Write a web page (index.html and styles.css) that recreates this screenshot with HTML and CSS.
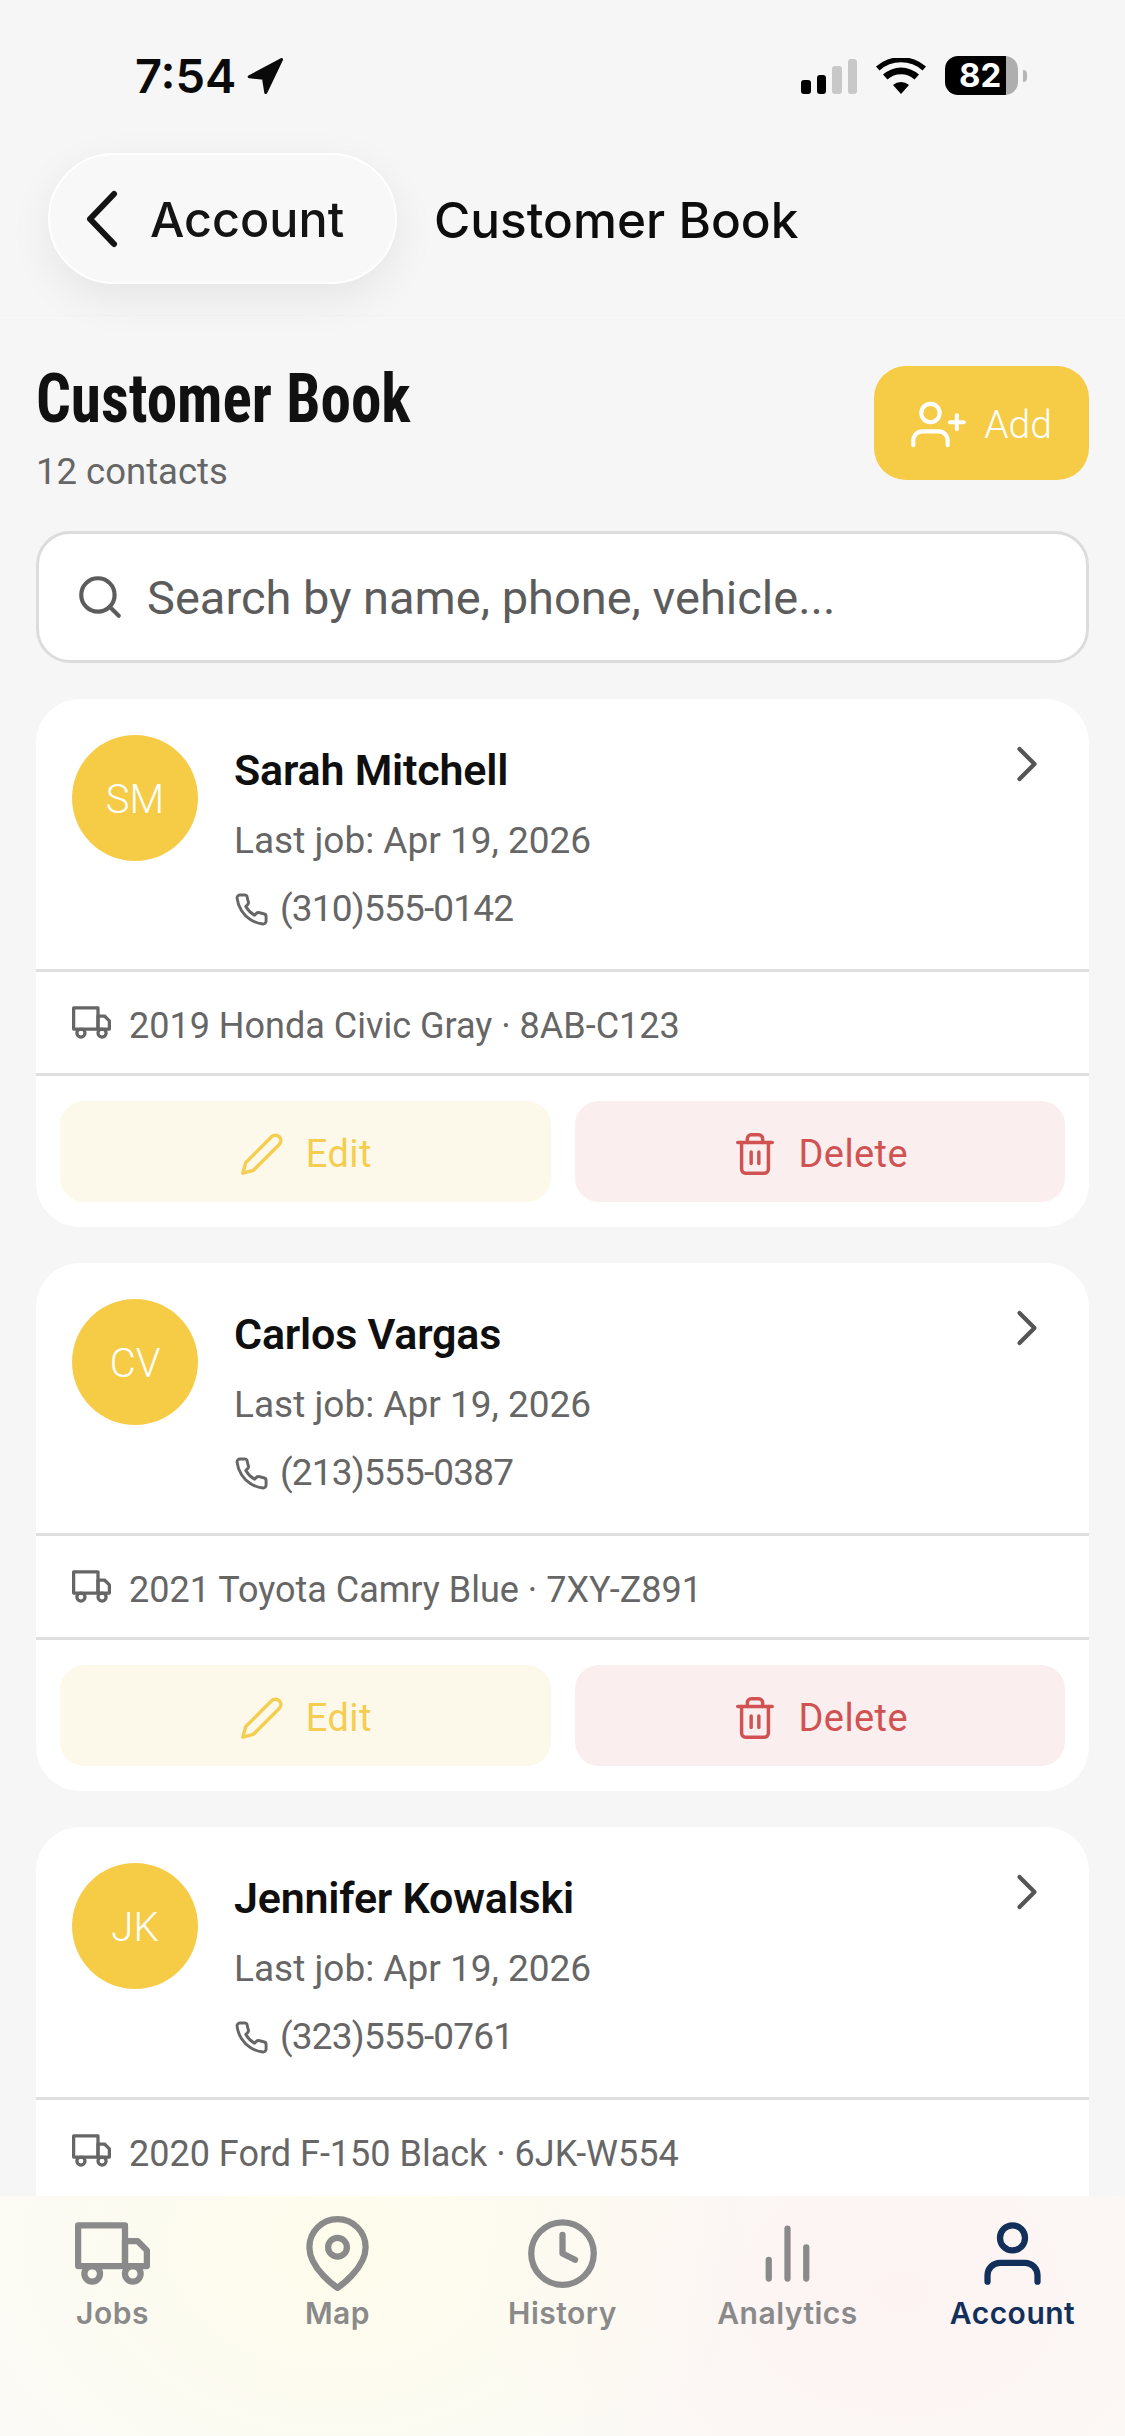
FILE: index.html
```html
<!DOCTYPE html>
<html lang="en">
<head>
  <meta charset="UTF-8">
  <meta name="viewport" content="width=device-width, initial-scale=1.0">
  <title>Customer Book</title>
  <link rel="stylesheet" href="styles.css">
</head>
<body>
  <!-- shared icons -->
  <svg class="icon-sprite" aria-hidden="true">
    <symbol id="i-truck" viewBox="0 0 24 24">
      <rect x="1" y="3" width="15" height="13"/><path d="M16 8h4l3 3v5h-7Z"/>
      <circle cx="5.500" cy="18.500" r="2.500"/><circle cx="18.500" cy="18.500" r="2.500"/>
    </symbol>
    <symbol id="i-phone" viewBox="0 0 24 24">
      <path d="M22 16.920v3a2 2 0 0 1-2.180 2 19.790 19.790 0 0 1-8.630-3.070 19.500 19.500 0 0 1-6-6 19.790 19.790 0 0 1-3.070-8.670A2 2 0 0 1 4.110 2h3a2 2 0 0 1 2 1.720 12.840 12.840 0 0 0 .7 2.810 2 2 0 0 1-.45 2.110L8.090 9.910a16 16 0 0 0 6 6l1.270-1.270a2 2 0 0 1 2.110-.45 12.840 12.840 0 0 0 2.810.7A2 2 0 0 1 22 16.920z"/>
    </symbol>
    <symbol id="i-pencil" viewBox="0 0 24 24">
      <path d="M17 3a2.828 2.828 0 1 1 4 4L7.500 20.500 2 22l1.500-5.500L17 3z"/>
    </symbol>
    <symbol id="i-trash" viewBox="0 0 24 24">
      <path d="M3 6h18"/><path d="M19 6v14a2 2 0 0 1-2 2H7a2 2 0 0 1-2-2V6m3 0V4a2 2 0 0 1 2-2h4a2 2 0 0 1 2 2v2"/>
      <path d="M10 11v6"/><path d="M14 11v6"/>
    </symbol>
    <symbol id="i-chevron" viewBox="0 0 24 24"><path d="m9 18 6-6-6-6"/></symbol>
  </svg>

  <div class="phone">
    <header class="top">
      <div class="status-bar">
        <div class="status-time">
          <span>7:54</span>
          <svg class="status-arrow" viewBox="0 0 24 24"><path d="M23 1 1.500 12.500l9.500 1 1.500 9.500Z"/></svg>
        </div>
        <div class="status-right">
          <div class="signal"><i class="bar-1"></i><i class="bar-2"></i><i class="bar-3 off"></i><i class="bar-4 off"></i></div>
          <svg class="wifi" viewBox="0 0 50 36">
            <path d="M25 36 17 27a12 12 0 0 1 16 0Z"/>
            <path d="M11.500 21.500 7 16.500a27 27 0 0 1 36 0l-4.500 5a20 20 0 0 0-27 0Z"/>
            <path d="M3.500 12.500 0 8.500a38 38 0 0 1 50 0l-3.500 4a32 32 0 0 0-43 0Z"/>
          </svg>
          <div class="battery">
            <div class="battery-body"><span>82</span></div>
            <div class="battery-cap"></div>
          </div>
        </div>
      </div>
      <div class="nav-row">
        <button class="back-pill" type="button">
          <svg viewBox="0 0 36 58" class="back-chevron"><path d="M30 4 6 29l24 25"/></svg>
          <span>Account</span>
        </button>
        <span class="nav-title">Customer Book</span>
      </div>
    </header>

    <main class="content">
      <div class="page-head">
        <div>
          <h1>Customer Book</h1>
          <p class="count">12 contacts</p>
        </div>
        <button class="add-btn" type="button">
          <svg viewBox="0 0 24 24" class="ico add-ico">
            <path d="M16 21v-2a4 4 0 0 0-4-4H5a4 4 0 0 0-4 4v2"/><circle cx="8.500" cy="7" r="4"/>
            <path d="M20 8v6"/><path d="M23 11h-6"/>
          </svg>
          Add
        </button>
      </div>

      <div class="search">
        <svg viewBox="0 0 24 24" class="ico search-ico"><circle cx="11" cy="11" r="8"/><path d="m21 21-4.350-4.350"/></svg>
        <span>Search by name, phone, vehicle...</span>
      </div>

      <section class="card">
        <div class="card-main">
          <div class="avatar">SM</div>
          <div class="info">
            <div class="name">Sarah Mitchell</div>
            <div class="meta">Last job: Apr 19, 2026</div>
            <div class="meta phone-line"><svg class="ico small"><use href="#i-phone"/></svg>(310)555-0142</div>
          </div>
          <svg class="ico chevron"><use href="#i-chevron"/></svg>
        </div>
        <div class="vehicle"><svg class="ico truck"><use href="#i-truck"/></svg>2019 Honda Civic Gray · 8AB-C123</div>
        <div class="actions">
          <button class="act edit" type="button"><svg class="ico"><use href="#i-pencil"/></svg>Edit</button>
          <button class="act del" type="button"><svg class="ico"><use href="#i-trash"/></svg>Delete</button>
        </div>
      </section>

      <section class="card">
        <div class="card-main">
          <div class="avatar">CV</div>
          <div class="info">
            <div class="name">Carlos Vargas</div>
            <div class="meta">Last job: Apr 19, 2026</div>
            <div class="meta phone-line"><svg class="ico small"><use href="#i-phone"/></svg>(213)555-0387</div>
          </div>
          <svg class="ico chevron"><use href="#i-chevron"/></svg>
        </div>
        <div class="vehicle"><svg class="ico truck"><use href="#i-truck"/></svg>2021 Toyota Camry Blue · 7XY-Z891</div>
        <div class="actions">
          <button class="act edit" type="button"><svg class="ico"><use href="#i-pencil"/></svg>Edit</button>
          <button class="act del" type="button"><svg class="ico"><use href="#i-trash"/></svg>Delete</button>
        </div>
      </section>

      <section class="card">
        <div class="card-main">
          <div class="avatar">JK</div>
          <div class="info">
            <div class="name">Jennifer Kowalski</div>
            <div class="meta">Last job: Apr 19, 2026</div>
            <div class="meta phone-line"><svg class="ico small"><use href="#i-phone"/></svg>(323)555-0761</div>
          </div>
          <svg class="ico chevron"><use href="#i-chevron"/></svg>
        </div>
        <div class="vehicle"><svg class="ico truck"><use href="#i-truck"/></svg>2020 Ford F-150 Black · 6JK-W554</div>
      </section>
    </main>

    <nav class="tabs">
      <div class="tab">
        <svg class="ico"><use href="#i-truck"/></svg>
        <span>Jobs</span>
      </div>
      <div class="tab">
        <svg viewBox="0 0 24 24" class="ico"><path d="M21 10c0 7-9 13-9 13s-9-6-9-13a9 9 0 0 1 18 0z"/><circle cx="12" cy="10" r="3"/></svg>
        <span>Map</span>
      </div>
      <div class="tab">
        <svg viewBox="0 0 24 24" class="ico"><circle cx="12" cy="12" r="10"/><path d="M12 6v6l4 2"/></svg>
        <span>History</span>
      </div>
      <div class="tab">
        <svg viewBox="0 0 24 24" class="ico"><path d="M18 20V10"/><path d="M12 20V4"/><path d="M6 20v-6"/></svg>
        <span>Analytics</span>
      </div>
      <div class="tab active">
        <svg viewBox="0 0 24 24" class="ico"><path d="M20 21v-2a4 4 0 0 0-4-4H8a4 4 0 0 0-4 4v2"/><circle cx="12" cy="7" r="4"/></svg>
        <span>Account</span>
      </div>
    </nav>
  </div>
</body>
</html>
```

FILE: styles.css
```css
* { margin: 0; padding: 0; box-sizing: border-box; }

html, body {
  width: 1125px;
  height: 2436px;
  overflow: hidden;
  background: #f6f6f6;
  font-family: Roboto, "Liberation Sans", sans-serif;
}

button { font: inherit; border: none; }

.icon-sprite { display: none; }

.ico {
  width: 24px;
  height: 24px;
  fill: none;
  stroke: currentColor;
  stroke-width: 2;
  stroke-linecap: round;
  stroke-linejoin: round;
  flex-shrink: 0;
}

.phone {
  width: 1125px;
  height: 2436px;
  display: flex;
  flex-direction: column;
}

/* status bar + nav row */
.top {
  height: 316px;
  flex-shrink: 0;
  background: #f6f6f6;
  border-bottom: 1px solid #f3f3f3;
}

.status-bar {
  height: 153px;
  padding: 0 98px 0 135px;
  display: flex;
  justify-content: space-between;
  align-items: flex-start;
}

.status-time {
  margin-top: 48px;
  display: flex;
  align-items: center;
  gap: 11px;
  font: 600 47px/56px Inter, sans-serif;
  color: #0a0a0a;
}

.status-arrow {
  width: 36px;
  height: 36px;
  fill: #0a0a0a;
  stroke: #0a0a0a;
  stroke-width: 2;
  stroke-linejoin: round;
}

.status-right {
  margin-top: 56px;
  display: flex;
  align-items: center;
  gap: 19px;
}

.signal { display: flex; align-items: flex-end; gap: 6px; height: 36px; }
.signal i { display: block; width: 9.500px; background: #000; border-radius: 3px; }
.signal .bar-1 { height: 14px; }
.signal .bar-2 { height: 19px; }
.signal .bar-3 { height: 28px; }
.signal .bar-4 { height: 35px; }
.signal .off { background: #c8c8c8; }

.wifi { width: 50px; height: 36px; fill: #000; }

.battery { display: flex; align-items: center; gap: 5px; }

.battery-body {
  width: 73px;
  height: 39px;
  border-radius: 13px;
  background: linear-gradient(90deg, #000 0 84%, #aeaeae 84%);
  color: #fff;
  font: 700 33px/39px Inter, sans-serif;
  padding-left: 14px;
}

.battery-cap {
  width: 4px;
  height: 12px;
  background: #b5b5b5;
  border-radius: 0 4px 4px 0;
}

.nav-row {
  display: flex;
  align-items: center;
  gap: 37px;
  padding-left: 48px;
}

.back-pill {
  width: 349px;
  height: 131px;
  border-radius: 66px;
  background: #f8f8f8;
  border: 2px solid #fff;
  box-shadow: 0 14px 44px rgba(0, 0, 0, 0.07);
  display: flex;
  align-items: center;
  gap: 30px;
  padding-left: 34px;
  font: 500 48.500px/60px Inter, sans-serif;
  color: #141414;
}

.back-pill span { margin-top: 3px; }

.back-chevron {
  width: 36px;
  height: 58px;
  fill: none;
  stroke: #141414;
  stroke-width: 6;
  stroke-linecap: round;
  stroke-linejoin: round;
}

.nav-title {
  font: 500 49.500px/60px Inter, sans-serif;
  color: #0d0d0d;
  margin-top: 3px;
}

/* scrolling list */
.content {
  flex: 1;
  overflow: hidden;
  padding: 45px 36px 0;
}

.page-head {
  display: flex;
  justify-content: space-between;
  align-items: flex-start;
  margin-bottom: 38px;
}

h1 {
  font-size: 68px;
  line-height: 76px;
  font-weight: 700;
  color: #111;
  font-stretch: condensed;
  transform: scaleX(0.9);
  transform-origin: left center;
  width: 372px;
  white-space: nowrap;
}

.count {
  margin-top: 14px;
  font-size: 36.500px;
  line-height: 42px;
  color: #666;
}

.add-btn {
  width: 215px;
  height: 114px;
  margin-top: 5px;
  padding-top: 3px;
  border-radius: 32px;
  background: #f6cc47;
  color: #fff;
  font-size: 39px;
  font-weight: 300;
  display: flex;
  align-items: center;
  justify-content: center;
  gap: 18px;
}

.add-ico { width: 55px; height: 55px; stroke-width: 1.800; }

.search {
  height: 132px;
  border: 3px solid #dcdcdc;
  border-radius: 34px;
  background: #fff;
  display: flex;
  align-items: center;
  gap: 22px;
  padding-left: 36px;
  color: #5c5c5c;
  font-size: 47px;
  margin-bottom: 36px;
}

.search-ico { width: 50px; height: 50px; }

.card {
  height: 528px;
  background: #fff;
  border-radius: 44px;
  margin-bottom: 36px;
  overflow: hidden;
  display: flex;
  flex-direction: column;
}

.card-main {
  height: 273px;
  padding: 36px 36px 0;
  display: flex;
  border-bottom: 3px solid #dfdfdf;
}

.avatar {
  width: 126px;
  height: 126px;
  padding-top: 2px;
  border-radius: 50%;
  background: #f6cc47;
  color: #fff;
  font-size: 40px;
  font-weight: 300;
  display: flex;
  align-items: center;
  justify-content: center;
  flex-shrink: 0;
}

.info { flex: 1; padding-left: 36px; }

.name {
  font-size: 43px;
  line-height: 52px;
  font-weight: 600;
  letter-spacing: -0.2px;
  color: #0f0f0f;
  margin-top: 9px;
}

.meta {
  font-size: 37px;
  line-height: 44px;
  color: #666;
  margin-top: 23px;
}

.phone-line { display: flex; align-items: center; gap: 11px; letter-spacing: -0.8px; margin-top: 24px; }
.phone-line .small { width: 35px; height: 35px; }

.chevron {
  width: 60px;
  height: 60px;
  color: #555;
  stroke-width: 1.700;
  margin-right: -4px;
  margin-top: -1px;
}

.vehicle {
  height: 104px;
  padding-top: 7px;
  border-bottom: 3px solid #dfdfdf;
  padding-left: 36px;
  display: flex;
  align-items: center;
  gap: 18px;
  font-size: 36px;
  color: #666;
}

.truck { width: 39px; height: 39px; margin-bottom: 7px; }

.actions {
  display: flex;
  gap: 24px;
  padding: 25px 24px 0;
}

.act {
  flex: 1;
  height: 101px;
  padding-top: 5px;
  border-radius: 24px;
  font-size: 38px;
  letter-spacing: 0.4px;
  display: flex;
  align-items: center;
  justify-content: center;
  gap: 21px;
}

.act .ico { width: 46px; height: 46px; stroke-width: 1.800; }

.edit { background: #fdf9ea; color: #f5cd51; }
.del { background: #fbeeee; color: #d05252; }

/* bottom tabs */
.tabs {
  height: 240px;
  flex-shrink: 0;
  display: grid;
  grid-template-columns: repeat(5, 1fr);
  background:
    radial-gradient(420px 320px at 30% 20%, #fefceb, transparent),
    radial-gradient(420px 320px at 80% 40%, #fdf3f3, transparent),
    #fbfaf6;
}

.tab {
  display: flex;
  flex-direction: column;
  align-items: center;
  padding-top: 20px;
  color: #8a8a8a;
  font: 600 30px/36px Inter, sans-serif;
  letter-spacing: 0.5px;
}

.tab .ico { width: 75px; height: 75px; margin-bottom: 4px; }

.tab.active { color: #12305a; }
```
